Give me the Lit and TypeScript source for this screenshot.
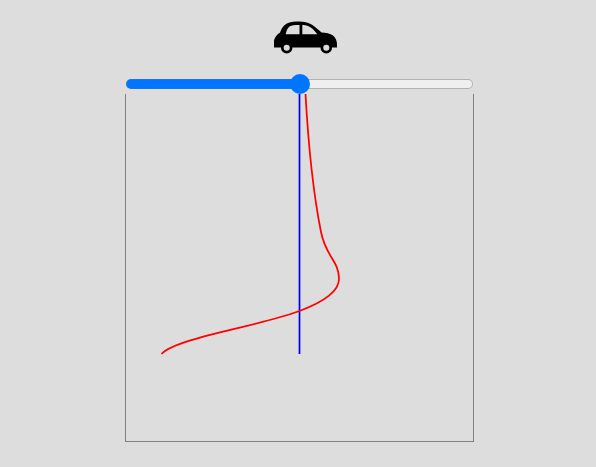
import { LitElement, html, css } from "lit";
import { customElement, state } from "lit/decorators.js";

@customElement("app-root")
export class AppRoot extends LitElement {
  static styles = css`
    :host {
      display: block;
      min-height: 100vh;
      box-sizing: border-box;
      background: #dddddd;
      padding: 20px 122px 25px 125px;
      font-family: "Liberation Sans", Arial, sans-serif;
    }
    .stage {
      display: flex;
      flex-direction: column;
    }
    .lane {
      display: flex;
      justify-content: center;
      margin: 0 0 20px 12px;
    }
    .car {
      display: block;
      width: 64px;
      height: 34px;
    }
    .steer {
      appearance: none;
      -webkit-appearance: none;
      display: block;
      width: calc(100% - 2px);
      height: 20px;
      margin: 0 1px;
      background: none;
      outline: none;
    }
    .steer::-webkit-slider-runnable-track {
      box-sizing: border-box;
      height: 10px;
      border: 1px solid transparent;
      border-radius: 5px;
      background:
        linear-gradient(to right, #0075ff var(--fill), #efefef var(--fill)) padding-box,
        linear-gradient(to right, #1a75e6 var(--fill), #b2b2b2 var(--fill)) border-box;
    }
    .steer::-webkit-slider-thumb {
      -webkit-appearance: none;
      width: 20px;
      height: 20px;
      margin-top: -6px;
      border: none;
      border-radius: 50%;
      background: #0075ff;
    }
    .plot {
      border: 1px solid #808080;
      border-top: none;
    }
    .chart {
      display: block;
      width: 100%;
      aspect-ratio: 1;
    }
  `;

  @state() private position = 50;

  private onInput(e: Event) {
    this.position = Number((e.target as HTMLInputElement).value);
  }

  render() {
    return html`
      <main class="stage">
        <div class="lane">
          <svg class="car" viewBox="0 0 64 34" aria-hidden="true">
            <path
              fill="#000"
              fill-rule="evenodd"
              d="M0 27.6V22C0 18 3 14 6 12.7C7.5 8.5 9.5 4.8 14 3C17 1.8 21 1.6 25 1.6C30 1.6 34 2.4 38 4.8C42 7.4 44.5 10 47.5 12.5C52 12.8 56 13.3 59 15.5C62 18 63 21.5 63 24.5V27.6ZM11.7 14.2H25.5V5C20.5 5 17.5 5.3 15.5 6.6C13.2 8.2 12.5 11 11.7 14.2ZM28.3 14.2H43.3C40.3 10.3 37.3 7.3 34 6C32 5.1 30 5 28.3 5Z"
            />
            <circle cx="12.7" cy="27.7" r="4.4" fill="#ddd" stroke="#000" stroke-width="2.7" />
            <circle cx="52.3" cy="27.7" r="4.4" fill="#ddd" stroke="#000" stroke-width="2.7" />
          </svg>
        </div>
        <input
          class="steer"
          type="range"
          min="0"
          max="100"
          aria-label="Position"
          style="--fill: ${this.position}%"
          .value=${String(this.position)}
          @input=${this.onInput}
        />
        <div class="plot">
          <svg class="chart" viewBox="0 0 347 347" role="img" aria-label="Position over time">
            <path d="M173.5 0V260" fill="none" stroke="#00f" stroke-width="1.75" />
            <path
              d="M179.5 0C182 45 187 98 195 138C200 163 213 167 213 185C213 198 196 208.5 173.5 217C130 233 50 244 35.5 260"
              fill="none"
              stroke="#f00"
              stroke-width="1.75"
            />
          </svg>
        </div>
      </main>
    `;
  }
}
